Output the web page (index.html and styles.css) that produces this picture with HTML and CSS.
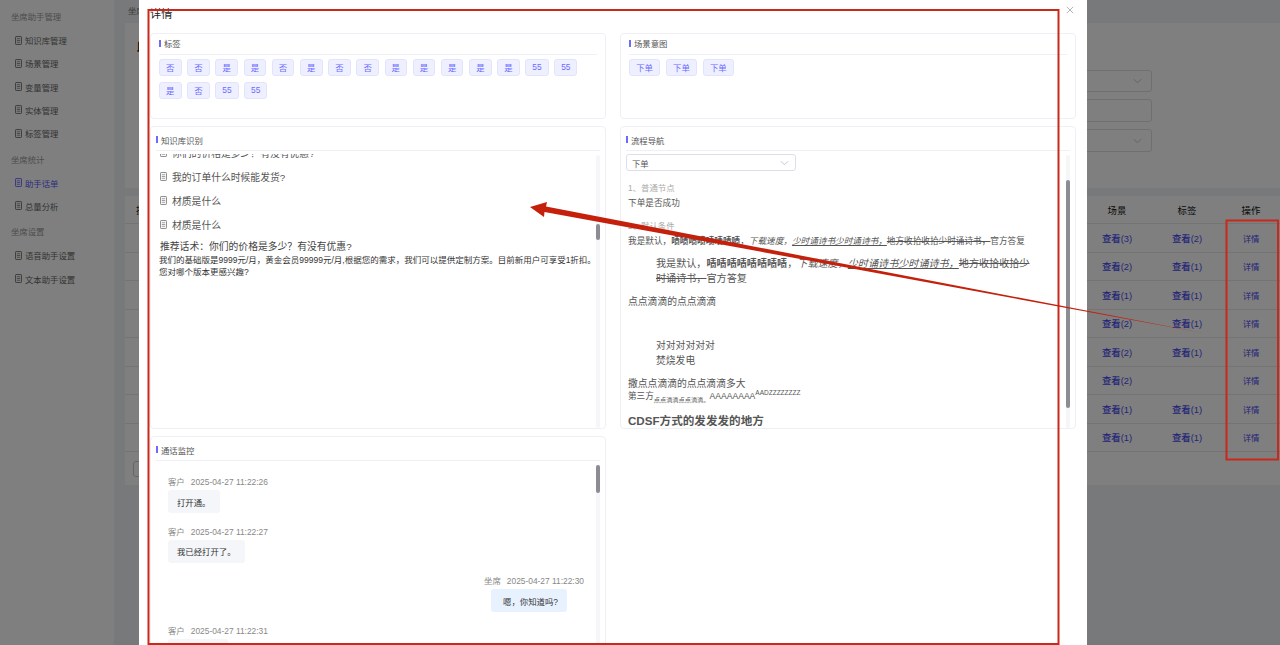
FILE: index.html
```html
<!DOCTYPE html>
<html lang="zh-CN">
<head>
<meta charset="utf-8">
<title>助手话单</title>
<link rel="stylesheet" href="styles.css">
</head>
<body>
<svg class="defs" width="0" height="0" aria-hidden="true">
  <symbol id="doc" viewBox="0 0 8 10">
    <rect x=".5" y=".5" width="7" height="9" rx=".8" fill="none" stroke="currentColor"/>
    <path d="M2 3h4M2 5h4M2 7h4" fill="none" stroke="currentColor" stroke-width=".8"/>
  </symbol>
  <symbol id="chev" viewBox="0 0 10 6">
    <path d="M1 1l4 4 4-4" fill="none" stroke="currentColor" stroke-width=".9"/>
  </symbol>
</svg>

<div class="page">
  <aside class="sidebar">
    <div class="side-head">坐席助手管理</div>
    <div class="side-item"><svg class="side-icon"><use href="#doc"/></svg>知识库管理</div>
    <div class="side-item"><svg class="side-icon"><use href="#doc"/></svg>场景管理</div>
    <div class="side-item"><svg class="side-icon"><use href="#doc"/></svg>变量管理</div>
    <div class="side-item"><svg class="side-icon"><use href="#doc"/></svg>实体管理</div>
    <div class="side-item"><svg class="side-icon"><use href="#doc"/></svg>标签管理</div>
    <div class="side-head">坐席统计</div>
    <div class="side-item active"><svg class="side-icon"><use href="#doc"/></svg>助手话单</div>
    <div class="side-item"><svg class="side-icon"><use href="#doc"/></svg>总量分析</div>
    <div class="side-head">坐席设置</div>
    <div class="side-item"><svg class="side-icon"><use href="#doc"/></svg>语音助手设置</div>
    <div class="side-item"><svg class="side-icon"><use href="#doc"/></svg>文本助手设置</div>
  </aside>
  <main class="main">
    <div class="crumb">坐席助手 / 助手话单</div>
    <section class="filter-card">
      <h1 class="page-title">助手话单</h1>
      <div class="filter-fields">
        <div class="field"><svg class="field-chev"><use href="#chev"/></svg></div>
        <div class="field tall"></div>
        <div class="field tall"><svg class="field-chev"><use href="#chev"/></svg></div>
      </div>
    </section>
    <section class="table-card">
      <div class="t-row t-head"><div class="t-first">操作人</div><div>场景</div><div>标签</div><div>操作</div></div>
      <div class="t-row"><div></div><a>查看(3)</a><a>查看(2)</a><a class="t-op">详情</a></div>
      <div class="t-row"><div></div><a>查看(2)</a><a>查看(1)</a><a class="t-op">详情</a></div>
      <div class="t-row"><div></div><a>查看(1)</a><a>查看(1)</a><a class="t-op">详情</a></div>
      <div class="t-row"><div></div><a>查看(2)</a><a>查看(1)</a><a class="t-op">详情</a></div>
      <div class="t-row"><div></div><a>查看(2)</a><a>查看(1)</a><a class="t-op">详情</a></div>
      <div class="t-row"><div></div><a>查看(2)</a><a></a><a class="t-op">详情</a></div>
      <div class="t-row"><div></div><a>查看(1)</a><a>查看(1)</a><a class="t-op">详情</a></div>
      <div class="t-row"><div></div><a>查看(1)</a><a>查看(1)</a><a class="t-op">详情</a></div>
      <div class="pager"><div class="pager-box"></div></div>
    </section>
  </main>
</div>

<div class="backdrop"></div>

<div class="modal">
  <div class="modal-title">详情</div>
  <svg class="modal-close" viewBox="0 0 10 10"><path d="M1 1l8 8M9 1l-8 8" fill="none" stroke="currentColor" stroke-width=".9"/></svg>
  <div class="modal-grid">
    <section class="panel panel-top">
      <div class="panel-head">标签</div>
      <div class="tags">
        <span class="tag">否</span><span class="tag">否</span><span class="tag">是</span><span class="tag">是</span><span class="tag">否</span><span class="tag">是</span><span class="tag">否</span><span class="tag">否</span><span class="tag">是</span><span class="tag">是</span><span class="tag">是</span><span class="tag">是</span><span class="tag">是</span><span class="tag num">55</span><span class="tag num">55</span><span class="tag">是</span><span class="tag">否</span><span class="tag num">55</span><span class="tag num">55</span>
      </div>
    </section>
    <section class="panel panel-top">
      <div class="panel-head">场景意图</div>
      <div class="tags intents">
        <span class="tag wide">下单</span><span class="tag wide">下单</span><span class="tag wide">下单</span>
      </div>
    </section>

    <section class="panel panel-mid">
      <div class="panel-head">知识库识别</div>
      <div class="kb-body">
        <div class="kb-list">
          <div class="kb-item"><svg class="kb-icon"><use href="#doc"/></svg>你们的价格是多少？有没有优惠?</div>
          <div class="kb-item"><svg class="kb-icon"><use href="#doc"/></svg>我的订单什么时候能发货?</div>
          <div class="kb-item"><svg class="kb-icon"><use href="#doc"/></svg>材质是什么</div>
          <div class="kb-item"><svg class="kb-icon"><use href="#doc"/></svg>材质是什么</div>
        </div>
        <p class="kb-ask">推荐话术：你们的价格是多少？有没有优惠?</p>
        <p class="kb-answer">我们的基础版是9999元/月，黄金会员99999元/月,根据您的需求，我们可以提供定制方案。目前新用户可享受1折扣。<br>您对哪个版本更感兴趣?</p>
      </div>
      <div class="track"><div class="thumb thumb-kb"></div></div>
    </section>

    <section class="panel panel-mid">
      <div class="panel-head">流程导航</div>
      <div class="flow-body">
        <div class="flow-select">下单<svg class="select-chev"><use href="#chev"/></svg></div>
        <div class="flow-label first">1、普通节点</div>
        <div class="flow-text">下单是否成功</div>
        <div class="flow-label second">2、默认条件</div>
        <div class="flow-text">我是默认，<b>啧啧啧啧啧啧啧啧</b>，<i>下载速度，</i><i class="under">少时诵诗书少时诵诗书，</i><s>地方收拾收拾少时诵诗书，</s>官方答复</div>
        <div class="flow-quote rich">我是默认，<b>啧啧啧啧啧啧啧啧</b>，<i>下载速度，</i><i class="under">少时诵诗书少时诵诗书，</i><s>地方收拾收拾少时诵诗书，</s>官方答复</div>
        <div class="flow-p">点点滴滴的点点滴滴</div>
        <div class="flow-quote big-gap">对对对对对对<br>焚烧发电</div>
        <div class="flow-p tight">撒点点滴滴的点点滴滴多大</div>
        <div class="flow-mix">第三方<sub>点点滴滴点点滴滴。</sub>AAAAAAAA<sup>AADZZZZZZZZ</sup></div>
        <div class="flow-h">CDSF方式的发发发的地方</div>
      </div>
      <div class="track"><div class="thumb thumb-flow"></div></div>
    </section>

    <section class="panel panel-chat">
      <div class="panel-head">通话监控</div>
      <div class="chat">
        <div class="msg"><div class="meta"><span>客户</span><span>2025-04-27 11:22:26</span></div><div class="bubble">打开通。</div></div>
        <div class="msg"><div class="meta"><span>客户</span><span>2025-04-27 11:22:27</span></div><div class="bubble">我已经打开了。</div></div>
        <div class="msg mine"><div class="meta"><span>坐席</span><span>2025-04-27 11:22:30</span></div><div class="bubble">嗯，你知道吗?</div></div>
        <div class="msg"><div class="meta"><span>客户</span><span>2025-04-27 11:22:31</span></div><div class="bubble">我知道了。</div></div>
      </div>
      <div class="track"><div class="thumb thumb-chat"></div></div>
    </section>
  </div>
</div>

<svg class="annotations" viewBox="0 0 1280 645" aria-hidden="true">
  <rect class="note-box" x="148.5" y="10" width="910" height="634"/>
  <rect class="note-box" x="1226.5" y="220.5" width="51.5" height="239"/>
  <polygon class="note-arrow" points="530,207 547,202 546,206.5 1203,333 544.5,212 544,217"/>
</svg>
</body>
</html>
```

FILE: styles.css
```css
* { box-sizing: border-box; }
html, body { margin: 0; height: 100%; overflow: hidden; }
body {
  font-family: "Liberation Sans", "Noto Sans CJK SC", sans-serif;
  font-size: 8.4px;
  color: #333;
  background: #f0f2f5;
}
.defs { position: absolute; }

/* page under the dialog */
.page { display: flex; height: 645px; }
.sidebar { width: 114px; flex: none; background: #fff; padding-top: 2.2px; color: #666; }
.side-head { height: 25px; margin-top: 1.2px; padding-left: 11px; display: flex; align-items: center; color: #999; }
.side-item { height: 23.3px; padding-left: 15px; display: flex; align-items: center; gap: 3px; }
.side-item.active { color: #5a5aff; }
.side-icon { width: 7px; height: 9px; }

.main { flex: 1; min-width: 0; padding-left: 11px; display: flex; flex-direction: column; }
.crumb { height: 23px; padding: 5px 0 0 3px; line-height: 12px; color: #777; white-space: nowrap; }
.filter-card { height: 165px; background: #fff; padding: 17px 128px 0 12px; }
.page-title { margin: 0; font-size: 12px; line-height: 16px; color: #111; }
.filter-fields { margin-top: 14px; display: flex; flex-direction: column; align-items: flex-end; gap: 7px; }
.field { width: 500px; height: 22px; border: 1px solid #dcdfe6; border-radius: 3px; display: flex; align-items: center; justify-content: flex-end; padding-right: 9px; color: #bbb; }
.field.tall { height: 23px; }
.field-chev { width: 9px; height: 6px; }

.table-card { margin-top: 8px; background: #fff; }
.t-row { display: grid; grid-template-columns: 1fr 70px 70px 58px; height: 28.5px; align-items: center; text-align: center; border-bottom: 1px solid #e8e8e8; font-size: 9.4px; color: #4a4aee; font-weight: 500; }
.t-row.t-head { height: 28px; color: #111; font-weight: 400; }
.t-first { text-align: left; padding-left: 11px; }
.t-op { font-size: 8.4px; font-weight: 400; }
.pager { height: 33px; padding: 9px 8px; }
.pager-box { width: 44px; height: 16px; border: 1px solid #ccc; border-radius: 3px; }

.backdrop { position: fixed; inset: 0; background: rgba(0, 0, 0, .5); }

/* dialog */
.modal { position: fixed; top: 0; bottom: 0; left: 139px; width: 948px; background: #fff; padding: 8px 11px 0; overflow: hidden; }
.modal-title { height: 25px; font-size: 11.2px; line-height: 12px; color: #222; }
.modal-close { position: absolute; top: 6px; right: 13px; width: 8px; height: 8px; color: #999; }
.modal-grid { display: grid; grid-template-columns: 456px 456px; column-gap: 14px; row-gap: 7px; grid-template-rows: 86px 303px 260px; }

.panel { position: relative; border: 1px solid #eef0f6; border-radius: 4px; padding: 0 5px; overflow: hidden; }
.panel-top { padding: 0 8px; }
.panel-head { height: 24px; padding-top: 2px; border-bottom: 1px solid #eef0f6; display: flex; align-items: center; gap: 3px; color: #555; white-space: nowrap; }
.panel-top .panel-head { height: 21px; padding: 0 0 2px; }
.panel-head::before { content: ""; width: 2px; height: 7px; background: #6b6bff; }

.tags { display: flex; flex-wrap: wrap; column-gap: 5.6px; row-gap: 6px; padding-top: 4px; }
.tag { height: 17px; width: 22.6px; padding-bottom: 1px; border: 1px solid #e2e4fb; border-radius: 3px; background: #eeefff; color: #6b6bff; display: flex; align-items: center; justify-content: center; }
.tag.num { width: 23.2px; }
.tag.wide { width: 31px; }
.tag.wide + .tag.wide { margin-left: .3px; }

.kb-body { height: 274px; margin-top: 3px; overflow: hidden; padding-left: 3px; }
.kb-list { margin-top: -13.5px; }
.kb-item { height: 24px; padding-left: 1px; display: flex; align-items: center; gap: 5px; font-size: 9.8px; color: #555; }
.kb-icon { width: 7px; height: 9px; color: #777; }
.kb-ask { margin: 3px 0 0 1px; font-size: 9.8px; line-height: 13.5px; color: #444; }
.kb-answer { margin: 1px 0 0; font-size: 8.5px; line-height: 12px; color: #333; white-space: nowrap; }

.track { position: absolute; top: 28px; bottom: 0; right: 5px; width: 4px; background: #f5f6fa; border-radius: 2px; }
.thumb { width: 4px; background: #8b8d92; border-radius: 2px; }
.thumb-kb { margin-top: 69px; height: 16px; }
.thumb-flow { margin-top: 25px; height: 228px; }
.thumb-chat { height: 28px; }

.flow-body { height: 278px; padding-top: 3px; overflow: hidden; color: #555; }
.flow-select { width: 170px; height: 17px; border: 1px solid #dcdfe6; border-radius: 3px; padding: 0 6px 0 5px; display: flex; align-items: center; justify-content: space-between; }
.select-chev { width: 9px; height: 6px; color: #bbb; }
.flow-label { padding-left: 2px; height: 12px; line-height: 12px; color: #aaa; margin-top: 11px; }
.flow-text { padding-left: 2px; font-size: 8.64px; line-height: 12px; margin-top: 3px; white-space: nowrap; }
.flow-quote { margin: 10px 0 0 30px; width: 380px; font-size: 9.8px; line-height: 14.5px; }
.flow-quote.rich { font-size: 10.1px; }
.flow-quote.big-gap { margin-top: 31px; }
.flow-p { padding-left: 2px; margin-top: 9px; font-size: 9.8px; line-height: 13px; }
.flow-p.tight { margin-top: 8.5px; }
.flow-mix { padding-left: 2px; height: 12px; font-size: 8.6px; line-height: 12px; margin-top: .5px; white-space: nowrap; }
.flow-mix sub { font-size: 6.2px; line-height: 0; }
.flow-mix sup { font-size: 6.5px; line-height: 0; }
.flow-h { padding-left: 2px; margin-top: 11px; font-size: 11.6px; line-height: 16px; font-weight: 700; white-space: nowrap; }
.under { text-decoration: underline; }

.chat { padding: 15px 16px 0 12px; }
.msg { margin-bottom: 12.5px; }
.meta { height: 12px; line-height: 12px; color: #888; display: flex; gap: 6px; }
.bubble { display: inline-flex; align-items: center; height: 23px; margin-top: 2px; padding: 0 9px; border-radius: 3px; background: #f4f6f9; color: #333; }
.msg.mine { display: flex; flex-direction: column; align-items: flex-end; }
.msg.mine .bubble { background: #e8f2fe; margin-right: 17px; padding-left: 12px; }

/* screenshot annotations */
.annotations { position: fixed; inset: 0; width: 1280px; height: 645px; pointer-events: none; }
.note-box { fill: none; stroke: #c9281a; stroke-width: 2; }
.note-arrow { fill: #c4200c; }
```
